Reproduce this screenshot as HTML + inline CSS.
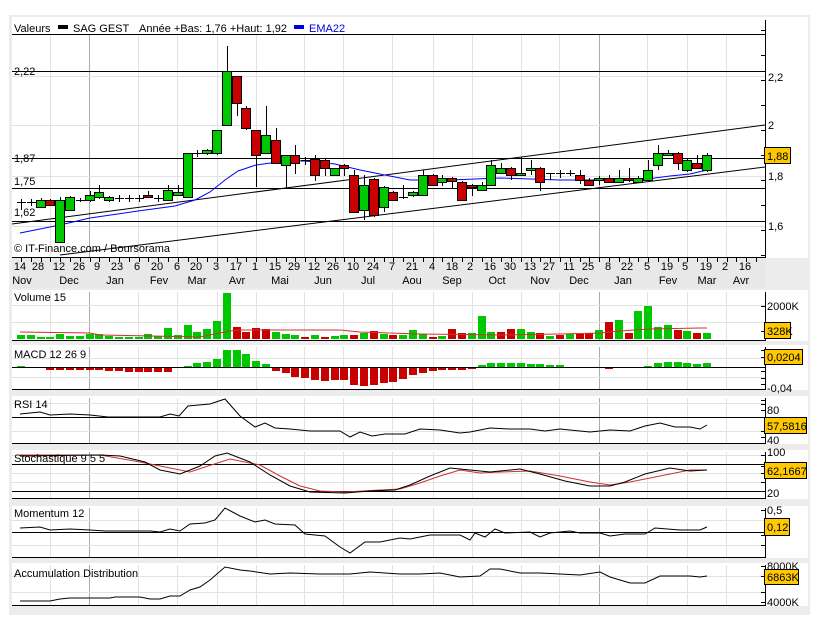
<!DOCTYPE html>
<html><head><meta charset="utf-8">
<style>
html,body{margin:0;padding:0;background:#fff;width:816px;height:624px;overflow:hidden}
svg{display:block;font-family:"Liberation Sans",Arial,sans-serif;font-size:11px}
</style></head><body>
<svg id="s" width="816" height="624" xmlns="http://www.w3.org/2000/svg"></svg>
<script>
var o=[];
function R(x,y,w,h,f,st){o.push('<rect x="'+x+'" y="'+y+'" width="'+w+'" height="'+h+'" fill="'+f+'"'+(st?' stroke="'+st+'" stroke-width="1"':'')+'/>');}
function L(x1,y1,x2,y2,c,w){o.push('<line x1="'+x1+'" y1="'+y1+'" x2="'+x2+'" y2="'+y2+'" stroke="'+c+'" stroke-width="'+(w||1)+'"/>');}
function T(x,y,t,c,a){o.push('<text x="'+x+'" y="'+y+'" fill="'+(c||'#000')+'"'+(a?' text-anchor="'+a+'"':'')+'>'+t+'</text>');}
function P(pts,c){o.push('<polyline fill="none" stroke="'+c+'" stroke-width="1" points="'+pts.map(function(p){return p.join(',')}).join(' ')+'"/>');}
// frame
R(9,15,801,600,'#ececec');
R(12,17,796,241,'#fff');
R(12,258,753,30,'#e8e8e8');
var panels=[[290,340],[345,389],[396,443],[450,498],[506,557],[563,605]];
panels.forEach(function(p){R(12,p[0],796,p[1]-p[0]+1,'#fff');});
var vg=[50,89,138,177,217,256,304,343,392,433,472,521,559,599,647,687,726];
function vgrid(y1,y2){vg.forEach(function(x){L(x+.5,y1,x+.5,y2,(x==89||x==599)?'#aaa':'#e2e2e2');});}
vgrid(35,257);
[76,125,176,226].forEach(function(y){L(12,y+.5,765,y+.5,'#e2e2e2');});
[34,71,158,188,221].forEach(function(y){L(12,y+.5,765,y+.5,'#000');});
// trend lines
L(12,224,765,125,'#000');L(60,255,765,167,'#000');
// EMA
P([[20,233],[60,225],[90,218],[138,211],[175,206],[195,200],[210,192],[225,180],[238,171],[256,165],[285,161],[305,161],[335,164],[360,170],[380,174],[395,177],[410,180],[450,180],[500,178],[560,180],[640,180],[670,176],[690,174],[707,170]],'#0000ff');
// candles [top,bottom,high,low,color]
var c=[[202,202,199,210,0],[202,202,199,206,0],[200,207,198,208,'g'],[200,205,199,206,'r'],[200,242,197,242,'g'],[197,210,196,211,'g'],[200,200,198,202,0],[195,200,191,202,'g'],[192,197,185,199,'g'],[197,200,196,202,'g'],[198,198,195,202,0],[198,198,195,202,0],[198,198,195,202,0],[195,197,191,198,'r'],[198,198,195,202,0],[190,200,185,201,'g'],[192,195,185,196,'g'],[153,197,153,198,'g'],[153,153,150,157,0],[150,153,149,155,'g'],[130,153,130,155,'g'],[71,125,46,125,'g'],[76,103,76,116,'r'],[108,128,106,130,'r'],[130,155,130,187,'r'],[135,153,106,154,'g'],[140,163,128,164,'r'],[155,165,155,189,'g'],[155,163,145,174,'r'],[160,160,157,165,0],[159,175,155,181,'r'],[160,168,158,176,'r'],[168,175,168,176,'g'],[165,168,164,176,'r'],[175,212,170,213,'r'],[185,210,175,220,'g'],[179,215,178,217,'r'],[187,207,186,212,'g'],[192,200,191,201,'r'],[197,197,185,199,0],[192,195,191,197,'g'],[175,195,170,196,'g'],[175,185,174,186,'r'],[178,182,175,186,'g'],[178,181,177,188,'r'],[182,200,181,201,'r'],[185,187,184,196,'r'],[185,190,182,191,'g'],[165,185,160,186,'g'],[168,173,163,174,'g'],[168,175,167,180,'r'],[173,175,157,176,'g'],[168,170,160,175,'g'],[168,182,167,191,'r'],[173,173,173,180,0],[173,173,170,178,0],[173,173,170,176,0],[175,180,170,184,'r'],[180,185,178,186,'r'],[178,180,176,185,'g'],[178,182,175,183,'r'],[178,182,170,183,'g'],[178,180,168,182,'r'],[178,182,176,183,'g'],[170,180,160,181,'g'],[153,165,145,170,'g'],[153,155,150,156,'g'],[153,163,152,170,'r'],[160,170,158,172,'g'],[163,168,155,169,'r'],[155,170,153,172,'g']];
c.forEach(function(d,i){var x=Math.round(21+i*9.8);L(x+.5,d[2],x+.5,d[3],'#000');
 if(d[4]){R(x-4.5,d[0]+.5,9,Math.max(1,d[1]-d[0]),d[4]=='g'?'#00c800':'#c80000','#000');}else{L(x-4,d[0]+.5,x+5,d[0]+.5,'#000');}});
// axes main
L(765.5,20,765.5,257,'#000');L(12,257.5,766,257.5,'#000');
for(var y=30;y<257;y+=25)L(761,y+.5,765,y+.5,'#000');
for(var i=0;i<76;i++){var x=Math.round(21+i*9.8);if(x<765)L(x+.5,258,x+.5,262,'#000');}
T(768,81,'2,2');T(768,129,'2');T(768,180,'1,8');T(768,230,'1,6');
R(764.5,147.5,26,16,'#ffc800','#000');T(767,160,'1,88');
T(14,32,'Valeurs');R(58,25,10,4,'#000');T(73,32,'SAG GEST');T(139,32,'Année +Bas: 1,76 +Haut: 1,92');R(294,25,10,4,'#0000e0');T(309,32,'EMA22','#0000e0');
T(14,75,'2,22');T(14,162,'1,87');T(14,185,'1,75');T(14,216,'1,62');
T(14,252,'© IT-Finance.com / Boursorama');
var d1=[[20,'14'],[38,'28'],[59,'12'],[79,'26'],[97,'9'],[117,'23'],[137,'6'],[157,'20'],[177,'6'],[196,'20'],[216,'3'],[236,'17'],[255,'1'],[275,'15'],[294,'29'],[314,'12'],[333,'26'],[353,'10'],[373,'24'],[392,'7'],[412,'21'],[432,'4'],[452,'18'],[470,'2'],[490,'16'],[510,'30'],[530,'13'],[549,'27'],[569,'11'],[588,'25'],[608,'8'],[627,'22'],[647,'5'],[667,'19'],[685,'5'],[706,'19'],[725,'2'],[745,'16']];
d1.forEach(function(d){T(d[0],270,d[1],'#000','middle');});
var d2=[[22,'Nov'],[69,'Dec'],[115,'Jan'],[159,'Fev'],[197,'Mar'],[237,'Avr'],[280,'Mai'],[323,'Jun'],[368,'Jul'],[412,'Aou'],[452,'Sep'],[497,'Oct'],[540,'Nov'],[579,'Dec'],[623,'Jan'],[668,'Fev'],[707,'Mar'],[741,'Avr']];
d2.forEach(function(d){T(d[0],284,d[1],'#000','middle');});
// panels grid & axes
panels.forEach(function(p){vgrid(p[0]+2,p[1]);L(765.5,p[0]+2,765.5,p[1],'#000');L(12,p[1]+.5,766,p[1]+.5,'#000');});
// volume
[305,322].forEach(function(y){L(12,y+.5,765,y+.5,'#e2e2e2');});
var vz=[135,135,140,140,131,138,138,131,131,138,140,140,140,131,138,114,136,105,126,117,93,8,110,126,114,117,126,131,135,141,135,141,138,135,135,128,122,131,136,136,120,131,140,138,117,128,128,78,126,126,117,117,126,128,138,135,131,131,128,120,96,90,128,63,47,111,105,120,122,128,128];
var vc='gggrggrggrgggggrggggrrrrgggrgrggrgrgrggggrgrrggrrrggrgrrgrgrggggrgrg';
vz.forEach(function(z,i){var x=Math.round(21+i*9.8);var h=Math.round((147-z)/3);var col=(i==22||i==23||i==24||i==25||i==29||i==31||i==34||i==36||i==38||i==42||i==44||i==45||i==49||i==50||i==53||i==55||i==57||i==58||i==60||i==62||i==67||i==69)?'#c80000':'#00c800';R(x-4,339-h,8,h,col);});
P([[20,332],[90,333],[100,335],[200,337],[215,334],[230,331],[240,330],[340,330],[360,332],[420,334],[500,335],[560,334],[600,333],[620,331],[650,329],[700,328],[707,328]],'#d03030');
L(761,306.5,765,306.5,'#000');L(761,331.5,765,331.5,'#000');
T(767,310,'2000K');R(764.5,322.5,26,16,'#ffc800','#000');T(767,335,'328K');
T(14,301,'Volume 15');
// macd
[358,377].forEach(function(y){L(12,y+.5,765,y+.5,'#e2e2e2');});
var mv=[1,0,0,-2,-2,-2,-2,-2,-2,-3,-3,-4,-4,-4,-4,-4,0,1,4,5,8,17,17,13,6,3,-3,-5,-9,-10,-12,-13,-12,-12,-17,-18,-17,-15,-14,-11,-7,-5,-3,-2,-2,-2,-1,2,4,4,4,4,3,3,2,2,0,0,0,0,-1,0,0,0,1,4,5,5,4,3,4];
mv.forEach(function(v,i){if(!v)return;var x=Math.round(21+i*9.8);if(v>0)R(x-4,367-v,8,v,'#00c800');else R(x-4,368,8,-v,'#c80000');});
L(12,367.5,765,367.5,'#000');
[350,357,371,378,384].forEach(function(y){L(761,y+.5,765,y+.5,'#000');});
R(764.5,349.5,38,15,'#ffc800','#000');T(767,361,'0,0204');T(767,392,'-0,04');
T(14,358,'MACD 12 26 9');
// rsi
[403,431].forEach(function(y){L(12,y+.5,765,y+.5,'#e2e2e2');});L(12,417.5,765,417.5,'#000');
P([[20,414],[40,412],[50,415],[70,414],[90,415],[108,417],[160,417],[170,414],[179,416],[188,406],[210,404],[225,399],[240,416],[255,427],[265,423],[275,428],[290,429],[310,431],[340,431],[350,437],[360,432],[372,436],[385,434],[405,434],[420,429],[440,430],[460,433],[470,432],[490,428],[510,429],[530,429],[545,431],[560,429],[590,432],[610,430],[630,431],[645,426],[660,423],[675,427],[690,427],[700,429],[707,425]],'#000');
[400,404,410,431,437].forEach(function(y){L(761,y+.5,765,y+.5,'#000');});
T(767,414,'80');R(764.5,417.5,42,16,'#ffc800','#000');T(767,430,'57,5816');T(767,444,'40');
T(14,408,'RSI 14');
// stoch
[455,473,482].forEach(function(y){L(12,y+.5,765,y+.5,'#e2e2e2');});L(12,464.5,765,464.5,'#000');L(12,491.5,765,491.5,'#000');
P([[20,455],[100,455],[140,462],[170,468],[190,472],[205,467],[230,459],[260,465],[280,476],[300,486],[320,491],[345,492],[380,490],[400,489],[420,483],[440,476],[460,470],[480,473],[500,472],[530,471],[560,476],[590,482],[610,485],[630,482],[660,476],[690,470],[707,470]],'#d03030');
P([[20,456],[100,455],[120,456],[145,462],[160,470],[180,474],[200,466],[215,456],[227,453],[250,462],[270,475],[290,486],[310,492],[345,493],[370,491],[395,490],[410,485],[430,476],[450,468],[470,470],[490,472],[520,469],[540,474],[565,481],[590,486],[610,486],[625,482],[645,474],[670,468],[690,471],[707,470]],'#000');
[455,466,473,482].forEach(function(y){L(761,y+.5,765,y+.5,'#000');});
T(767,456,'100');R(764.5,462.5,42,16,'#ffc800','#000');T(767,475,'62,1667');T(767,497,'20');
T(14,462,'Stochastique 9 5 5');
// momentum
[520,545].forEach(function(y){L(12,y+.5,765,y+.5,'#e2e2e2');});L(12,532.5,765,532.5,'#000');
P([[20,528],[40,527],[50,530],[70,529],[90,530],[105,531],[150,531],[160,532],[170,529],[180,531],[190,524],[205,523],[215,520],[225,508],[240,516],[255,522],[265,520],[275,524],[295,525],[305,534],[325,536],[340,547],[350,553],[365,542],[380,542],[400,538],[410,539],[430,535],[460,535],[470,540],[475,533],[485,537],[495,529],[505,533],[530,532],[540,537],[550,533],[570,531],[580,533],[600,533],[610,536],[625,534],[645,534],[655,528],[680,530],[700,530],[707,527]],'#000');
[510,535,545].forEach(function(y){L(761,y+.5,765,y+.5,'#000');});
T(767,514,'0,5');R(764.5,518.5,25,17,'#ffc800','#000');T(767,531,'0,12');
T(14,517,'Momentum 12');
// accdist
[576,592].forEach(function(y){L(12,y+.5,765,y+.5,'#e2e2e2');});
P([[20,601],[50,601],[60,599],[70,598],[110,598],[115,597],[140,597],[150,599],[160,599],[170,596],[180,596],[190,590],[200,587],[210,580],[225,567],[240,570],[250,571],[270,574],[290,573],[320,574],[350,574],[370,572],[400,574],[420,574],[440,573],[460,577],[480,576],[490,569],[500,569],[520,573],[540,573],[560,574],[580,575],[600,572],[610,577],[630,583],[645,583],[660,576],[690,576],[700,577],[707,576]],'#000');
[566,576,592,602].forEach(function(y){L(761,y+.5,765,y+.5,'#000');});
T(767,570,'8000K');R(764.5,569.5,34,15,'#ffc800','#000');T(767,581,'6863K');T(767,606,'4000K');
T(14,577,'Accumulation Distribution');
document.getElementById('s').innerHTML=o.join('');
</script>
</body></html>
